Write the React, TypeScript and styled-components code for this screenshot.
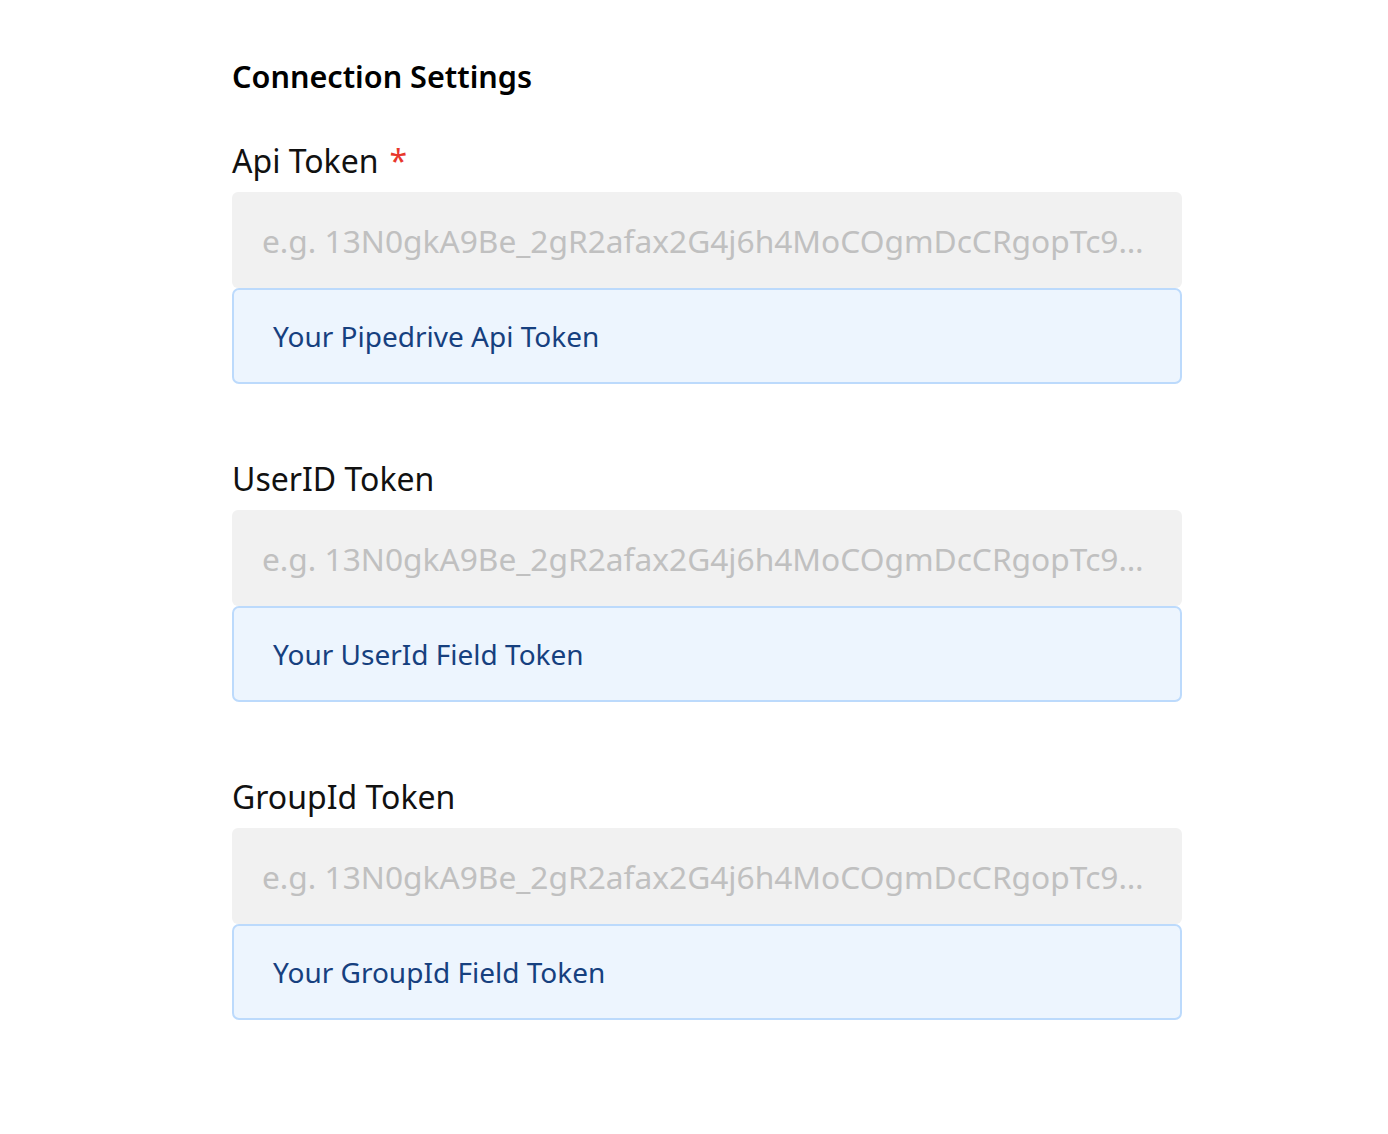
import React from "react";
import styled, { createGlobalStyle } from "styled-components";

const Global = createGlobalStyle`
  html, body { margin: 0; padding: 0; background: #ffffff; }
  body { font-family: "Noto Sans", "Open Sans", sans-serif; }
`;

const Page = styled.div`
  padding: 56px 0 0 232px;
  width: 950px;
`;

const Title = styled.h2`
  margin: 0 0 45px;
  font-size: 30.6px;
  line-height: 40px;
  font-weight: 600;
  color: #000;
`;

const Field = styled.div`
  display: flex;
  flex-direction: column;
  margin-bottom: 75px;
`;

const Label = styled.label`
  font-size: 32px;
  line-height: 40px;
  color: #111;
  margin-bottom: 11px;
`;

const Required = styled.span`
  color: #e8372c;
  margin-left: 11px;
`;

const Input = styled.input`
  box-sizing: border-box;
  width: 100%;
  height: 96px;
  border: none;
  border-radius: 6px;
  background: #f1f1f1;
  padding: 0 30px 0 30px;
  font-family: "Noto Sans", sans-serif;
  font-size: 31.7px;
  color: #333;
  outline: none;
  text-overflow: ellipsis;
  &::placeholder { color: #c0c0c0; }
`;

const Help = styled.div`
  box-sizing: border-box;
  height: 96px;
  border: 2px solid #bcdafc;
  border-radius: 7px;
  background: #edf5fe;
  padding: 0 39px;
  display: flex;
  align-items: center;
  font-size: 28px;
  color: #16407f;
`;

const placeholder = "e.g. 13N0gkA9Be_2gR2afax2G4j6h4MoCOgmDcCRgopTc9KxVb3Qz";

const fields = [
  { label: "Api Token", required: true, help: "Your Pipedrive Api Token" },
  { label: "UserID Token", required: false, help: "Your UserId Field Token" },
  { label: "GroupId Token", required: false, help: "Your GroupId Field Token" },
];

export default function App() {
  return (
    <>
      <Global />
      <Page>
        <Title>Connection Settings</Title>
        {fields.map((f) => (
          <Field key={f.label}>
            <Label>
              {f.label}
              {f.required && <Required>*</Required>}
            </Label>
            <Input placeholder={placeholder} />
            <Help>{f.help}</Help>
          </Field>
        ))}
      </Page>
    </>
  );
}
